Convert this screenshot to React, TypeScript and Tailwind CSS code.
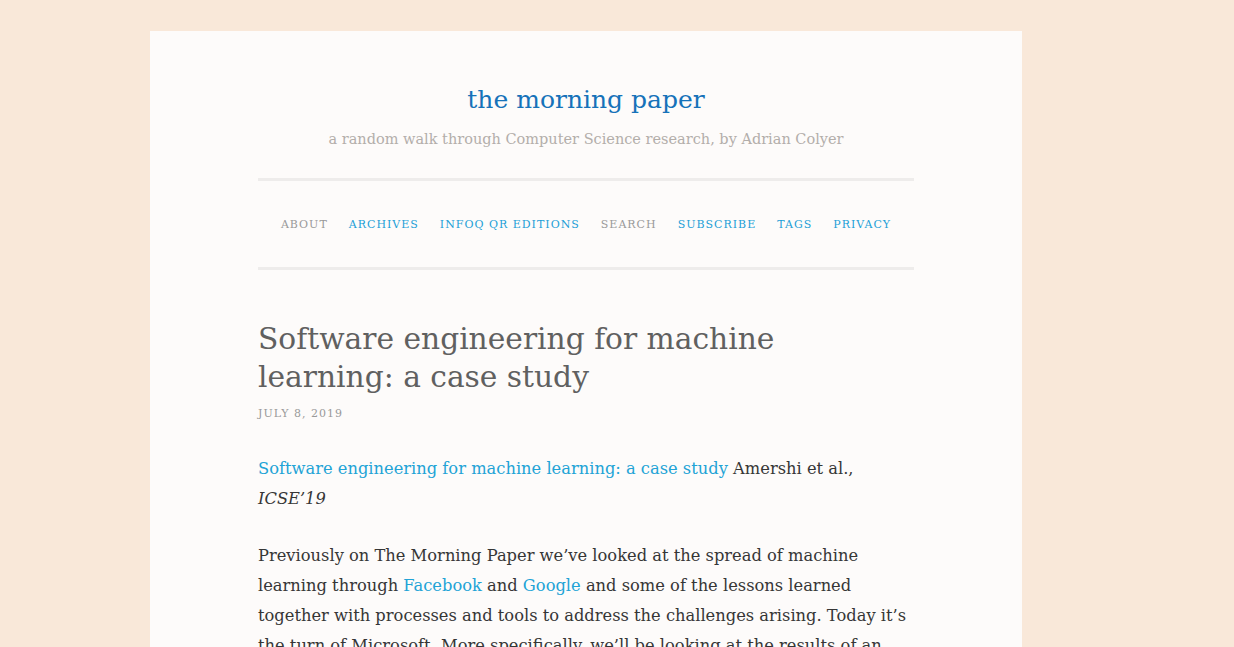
export default function App() {
  const nav = [
    { label: "About", muted: true },
    { label: "Archives" },
    { label: "InfoQ QR Editions" },
    { label: "Search", muted: true },
    { label: "Subscribe" },
    { label: "Tags" },
    { label: "Privacy" },
  ];

  return (
    <div className="h-[647px] overflow-hidden bg-[#f9e8d9] pt-[31px] font-['DejaVu_Serif',serif]">
      <div className="ml-[150px] w-[872px] bg-[#fdfbfa] px-[108px] pb-20">
        <header className="pt-[51px] text-center">
          <h1 className="text-[25px] leading-9 text-[#1672b9]">the morning paper</h1>
          <p className="mt-[11px] text-[14.5px] text-[#b3aeaa]">
            a random walk through Computer Science research, by Adrian Colyer
          </p>
        </header>

        <nav className="mt-[27px] border-y-[3px] border-[#eeeceb]">
          <ul className="flex h-[86px] items-center justify-center gap-[21px] pt-[3px]">
            {nav.map((n) => (
              <li
                key={n.label}
                className={`text-[11px] uppercase tracking-[1px] ${
                  n.muted ? "text-[#999]" : "text-[#1c9fd7]"
                }`}
              >
                {n.label}
              </li>
            ))}
          </ul>
        </nav>

        <article className="pt-[50px]">
          <h2 className="text-[29.7px] leading-[38px] text-[#606060]">
            Software engineering for machine learning: a case study
          </h2>
          <div className="mt-[10px] text-[11px] uppercase tracking-[1px] text-[#999]">
            July 8, 2019
          </div>

          <p className="mt-[32px] text-[16.3px] leading-[30px] text-[#363636]">
            <a className="text-[#22a3d6]">Software engineering for machine learning: a case study</a>{" "}
            Amershi et al., <em>ICSE’19</em>
          </p>

          <p className="mt-[27px] text-[16.3px] leading-[30px] text-[#363636]">
            Previously on The Morning Paper we’ve looked at the spread of machine learning through{" "}
            <a className="text-[#22a3d6]">Facebook</a> and <a className="text-[#22a3d6]">Google</a>{" "}
            and some of the lessons learned together with processes and tools to address the
            challenges arising. Today it’s the turn of Microsoft. More specifically, we’ll be looking
            at the results of an internal study with over 500 participants designed to figure out how
            product development and software engineering is changing at Microsoft with the rise of AI
            and ML.
          </p>
        </article>
      </div>
    </div>
  );
}
